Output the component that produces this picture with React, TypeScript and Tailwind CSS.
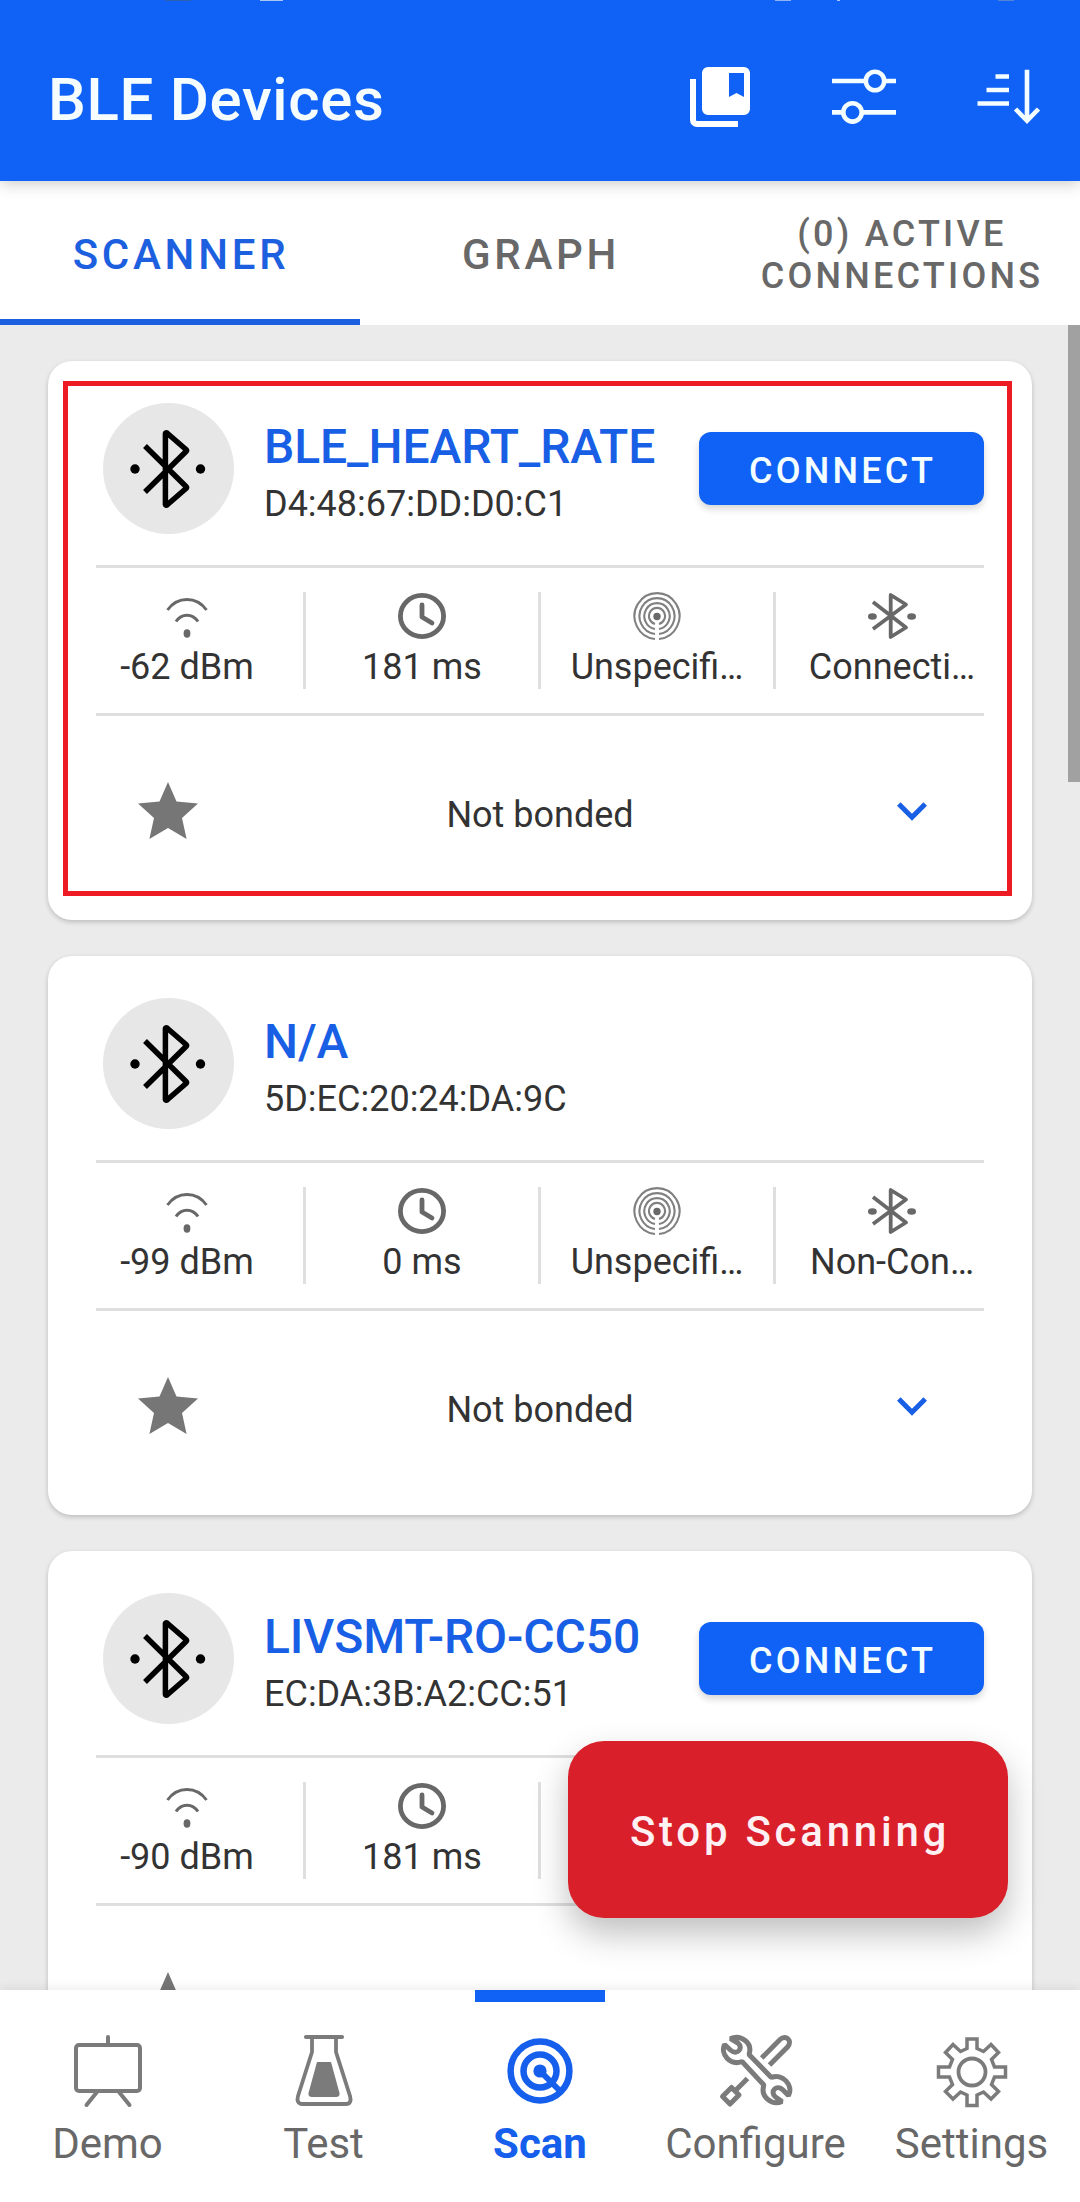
import React from "react";

type Device = {
  name: string;
  address: string;
  rssi: string;
  interval: string;
  mode: string;
  connectable: boolean;
  highlighted?: boolean;
};

const devices: Device[] = [
  { name: "BLE_HEART_RATE", address: "D4:48:67:DD:D0:C1", rssi: "-62 dBm", interval: "181 ms", mode: "Connecti…", connectable: true, highlighted: true },
  { name: "N/A", address: "5D:EC:20:24:DA:9C", rssi: "-99 dBm", interval: "0 ms", mode: "Non-Con…", connectable: false },
  { name: "LIVSMT-RO-CC50", address: "EC:DA:3B:A2:CC:51", rssi: "-90 dBm", interval: "181 ms", mode: "", connectable: true },
];

function BookmarksIcon() {
  return (
    <svg className="h-[60px] w-[61px]" viewBox="0 0 61 60" fill="none">
      <path d="M3 12V53a4 4 0 0 0 4 4H48" stroke="#fff" strokeWidth="6" />
      <path fillRule="evenodd" fill="#fff" d="M18 0H54a6 6 0 0 1 6 6V42a6 6 0 0 1-6 6H18a6 6 0 0 1-6-6V6a6 6 0 0 1 6-6ZM39 6V30L46.500 26 54 30V6Z" />
    </svg>
  );
}

function FilterIcon() {
  return (
    <svg className="h-[56px] w-[64px]" viewBox="0 0 64 56" fill="none" stroke="#f4fdff" strokeWidth="4.600">
      <path d="M0 12H33.500M52.500 12H64M0 43.400H11M30 43.400H64" />
      <circle cx="43" cy="12" r="9.200" />
      <circle cx="20.500" cy="43.400" r="9.200" />
    </svg>
  );
}

function SortIcon() {
  return (
    <svg className="h-[56px] w-[64px]" viewBox="0 0 64 56" fill="none" stroke="#f4fdff" strokeWidth="4.600">
      <path d="M18.500 7.500H32M9.500 21H32M0.500 34.500H32M50 0.800V51.500M38.500 40 50 51.800 61.500 40" />
    </svg>
  );
}

function BigBluetoothIcon() {
  return (
    <svg className="h-[78px] w-[76px]" viewBox="0 0 76 78" fill="none" stroke="#000" strokeWidth="5.500" strokeLinejoin="round">
      <path d="M15 16 56 56.500Q57 57.500 56 58.500L37 75a1 1 0 0 1-1.600-.6V3.600A1 1 0 0 1 37 3L56 19.500Q57 20.500 56 21.500L15 62" />
      <circle cx="5" cy="39" r="4.700" fill="#000" stroke="none" />
      <circle cx="70.500" cy="39" r="4.700" fill="#000" stroke="none" />
    </svg>
  );
}

function SmallBluetoothIcon() {
  return (
    <svg className="h-[48px] w-[48px]" viewBox="0 0 48 48" fill="none" stroke="#686868" strokeWidth="3.800">
      <path d="M5 10 38 35.500 22.700 45V3L38 12.500 5 37" strokeLinejoin="round" />
      <ellipse cx="4.400" cy="24.500" rx="4.400" ry="3.300" fill="#686868" stroke="none" />
      <ellipse cx="43.600" cy="24.500" rx="4.400" ry="3.300" fill="#686868" stroke="none" />
    </svg>
  );
}

function SignalIcon() {
  return (
    <svg className="h-[48px] w-[48px]" viewBox="0 0 48 48" fill="none" stroke="#686868" strokeWidth="3">
      <path d="M4.500 18C14.500 4 33.500 4 43.500 18M13 29.500C18.500 21 29.500 21 35 29.500" />
      <ellipse cx="24" cy="41.500" rx="3.400" ry="4.200" fill="#686868" stroke="none" />
    </svg>
  );
}

function ClockIcon() {
  return (
    <svg className="h-[48px] w-[48px]" viewBox="0 0 48 48" fill="none" stroke="#686868" strokeWidth="4.800">
      <ellipse cx="24" cy="24" rx="21.600" ry="20.600" />
      <path d="M24 13V25L34 31" strokeLinecap="round" strokeLinejoin="round" />
    </svg>
  );
}

function BeaconIcon() {
  return (
    <svg className="h-[50px] w-[48px]" viewBox="0 0 48 50" fill="none" stroke="#808080" strokeWidth="2.100">
      <path d="M22 47a22.500 23 0 1 1 4 0M22 42a17.500 18 0 1 1 4 0M22 37a12.700 13 0 1 1 4 0M22 32a8 8.200 0 1 1 4 0" />
      <circle cx="24" cy="24.500" r="3.700" fill="#686868" stroke="none" />
    </svg>
  );
}

function StarIcon() {
  return (
    <svg className="h-[57px] w-[60px]" viewBox="0 0 60 57" fill="#767676">
      <path d="M30 0 38.500 19.500 60 21.500 44 36 48.600 57 30 46 11.400 57 16 36 0 21.500 21.500 19.500Z" />
    </svg>
  );
}

function ChevronIcon() {
  return (
    <svg className="h-[20px] w-[30px]" viewBox="0 0 30 20" fill="none" stroke="#185fe5" strokeWidth="5">
      <path d="M1.800 2 15 15.200 28.200 2" />
    </svg>
  );
}

function DemoIcon() {
  return (
    <svg className="h-[76px] w-[76px]" viewBox="0 0 76 76" fill="none" stroke="#7b7b7b" strokeWidth="4" strokeLinecap="round">
      <rect x="6" y="12" width="64" height="46" rx="3" />
      <path d="M38 4V11M27 59 16.500 72M49 59 59.500 72" />
    </svg>
  );
}

function TestIcon() {
  return (
    <svg className="h-[76px] w-[76px]" viewBox="0 0 76 76" fill="none" stroke="#7b7b7b" strokeWidth="3.800">
      <path d="M20 4H56" strokeWidth="4.200" strokeLinecap="round" />
      <path d="M26 4V19L12 63C10.500 68 12.500 71 16 71H60C64 71 65.500 68 64 63L50 19V4" />
      <path d="M31 29H45L53.500 60Q54 64 50 64H26Q22 64 22.500 60Z" fill="#7b7b7b" stroke="none" />
    </svg>
  );
}

function ScanIcon() {
  return (
    <svg className="h-[76px] w-[76px]" viewBox="0 0 76 76" fill="none" stroke="#155fec" strokeWidth="6.500">
      <circle cx="38" cy="38" r="29.400" />
      <circle cx="38" cy="38" r="16.500" />
      <circle cx="38" cy="38" r="6.600" fill="#155fec" stroke="none" />
      <path d="M38 38 59 59" strokeWidth="6" />
    </svg>
  );
}

function ConfigureIcon() {
  return (
    <svg className="h-[76px] w-[76px]" viewBox="0 0 76 76" fill="none" stroke="#7b7b7b" strokeWidth="5">
      <path d="M12.500 5.500C23 1 35 10 31 21.500L53.400 44.500C64 40 76 52 70.500 62.500L65 57C59 51 51 58 57.500 64L64 68.500C54 73 42 64 45.900 52L24 28.500C12 33 2 21 6.500 11.500L12.400 17C19 23 26 15 19.900 10Z" strokeLinejoin="bevel" />
      <path d="M43.700 25 62 6.500C68 1 75 8 69.500 14L51.500 32M29.500 45.500 17 58" />
      <path d="M13.500 54.500 21 62 12 71 4.500 63.500Z" strokeLinejoin="round" />
    </svg>
  );
}

function SettingsIcon() {
  return (
    <svg className="h-[76px] w-[76px]" viewBox="0 0 76 76" fill="none" stroke="#7b7b7b" strokeWidth="3.500">
      <path d="M33 6H43V15.500L49.500 18.500 57 11.500 64.500 19.500 57.500 26.500 60.500 34H71.500V44H60.500L57.500 51.500 64.500 58.500 57 66 49.500 59 43 62V72.500H33V62L26.500 59 19 66 11.500 58.500 18.500 51.500 15.500 44H4.500V34H15.500L18.500 26.500 11.500 19.500 19 11.500 26.500 18.500 33 15.500Z" />
      <circle cx="38" cy="39" r="13.500" strokeWidth="3.800" />
    </svg>
  );
}

function Stat({ icon, label, last }: { icon: React.ReactNode; label: string; last?: boolean }) {
  return (
    <div className={last ? "flex h-[97px] w-[232px] flex-col items-center" : "flex h-[97px] w-[235px] flex-col items-center border-r-[3px] border-[#dfdfdf]"}>
      <div className="h-[50px]">{icon}</div>
      <span className="mt-[4px] text-[36px] leading-[42px] whitespace-nowrap">{label}</span>
    </div>
  );
}

function DeviceCard({ device }: { device: Device }) {
  const complete = device.mode !== "";
  return (
    <section className="relative flex h-[559px] w-[984px] shrink-0 flex-col rounded-[24px] bg-white px-12 text-[#333] shadow-[0_2px_5px_rgba(0,0,0,0.2)]">
      <div className="flex h-[204px] items-start">
        <div className="mt-[42px] ml-[7px] flex size-[131px] items-center justify-center rounded-full bg-[#e7e7e7] pr-px">
          <BigBluetoothIcon />
        </div>
        <div className="mt-[57px] ml-[30px] flex flex-col">
          <h2 className="text-[48px] leading-[58px] font-medium tracking-[-0.1px] whitespace-nowrap text-[#185fe5]">{device.name}</h2>
          <p className="text-[36px] leading-[56px] whitespace-nowrap">{device.address}</p>
        </div>
        {device.connectable && (
          <button className="mt-[71px] ml-auto h-[73px] w-[285px] rounded-[12px] bg-[#0f62f5] pt-[5px] pl-[2px] text-center text-[36px] font-medium tracking-[3.2px] text-[#f4fdff] shadow-[0_4px_7px_rgba(0,0,0,0.16)]">
            CONNECT
          </button>
        )}
      </div>
      <div className="-mx-[25px] flex h-[151px] flex-col">
        <div className="mx-[25px] h-[3px] bg-[#dfdfdf]" />
        <div className="flex h-[145px] items-center">
          <Stat icon={<SignalIcon />} label={device.rssi} />
          <Stat icon={<ClockIcon />} label={device.interval} />
          {complete && <Stat icon={<BeaconIcon />} label="Unspecifi…" />}
          {complete && <Stat icon={<SmallBluetoothIcon />} label={device.mode} last />}
        </div>
        <div className="mx-[25px] h-[3px] bg-[#dfdfdf]" />
      </div>
      <div className="flex items-start justify-between pt-[66px] pr-[57px] pl-[42px]">
        <StarIcon />
        {complete && <p className="mt-[12px] mr-[15px] w-[300px] text-center text-[36px] leading-[42px]">Not bonded</p>}
        <div className="mt-[20px]"><ChevronIcon /></div>
      </div>
      {device.highlighted && <div className="absolute top-[20px] left-[15px] h-[515px] w-[949px] border-[5px] border-[#ed1c24]" />}
    </section>
  );
}

const navItems = [
  { label: "Demo", icon: <DemoIcon /> },
  { label: "Test", icon: <TestIcon /> },
  { label: "Scan", icon: <ScanIcon />, active: true },
  { label: "Configure", icon: <ConfigureIcon /> },
  { label: "Settings", icon: <SettingsIcon /> },
];

export default function App() {
  return (
    <div className="relative flex h-[2202px] w-[1080px] flex-col overflow-hidden bg-[#ebebeb] font-['Roboto',sans-serif]">
      <header className="relative z-10 flex h-[181px] shrink-0 items-center bg-[#0f62f5] pr-[39px] pl-[48px] shadow-[0_3px_14px_rgba(0,0,0,0.2)]">
        <div className="absolute inset-x-0 top-0 flex h-px">
          <div className="ml-[165px] w-[26px] bg-[#2c5fae]" />
          <div className="ml-[69px] w-[23px] bg-[#a9c6f5]" />
          <div className="ml-[492px] w-[16px] bg-[#8fb2f2]" />
          <div className="ml-[46px] w-[3px] bg-[#a9c6f5]" />
          <div className="ml-[158px] w-[16px] bg-[#5483d8]" />
        </div>
        <h1 className="mt-[18px] text-[60px] leading-[70px] font-medium tracking-[0.65px] text-[#f6fdff]">BLE Devices</h1>
        <div className="mt-[12px] ml-auto flex items-center">
          <BookmarksIcon />
          <div className="mt-px ml-[81px]"><FilterIcon /></div>
          <div className="mt-px ml-[81px]"><SortIcon /></div>
        </div>
      </header>
      <nav className="grid h-[144px] shrink-0 grid-cols-3 bg-white text-center font-medium text-[#686868]">
        <div className="flex items-center justify-center border-b-[6px] border-[#1c60e0] pt-[9px] pl-[2px] text-[42px] tracking-[3.75px] text-[#1c60e0]">SCANNER</div>
        <div className="flex items-center justify-center pt-[3px] pl-[2px] text-[42px] tracking-[3.75px]">GRAPH</div>
        <div className="flex items-center justify-center pt-[3px] pl-[4px] text-[36px] leading-[42px] tracking-[3.25px]">(0) ACTIVE<br />CONNECTIONS</div>
      </nav>
      <main className="flex min-h-0 flex-1 overflow-hidden">
        <div className="flex w-[1068px] flex-col gap-[36px] pt-[36px] pl-[48px]">
          {devices.map((device) => <DeviceCard key={device.address} device={device} />)}
        </div>
        <div className="h-[457px] w-[12px] bg-[#a1a1a1]" />
      </main>
      <button className="absolute top-[1741px] left-[568px] h-[177px] w-[440px] rounded-[36px] bg-[#d91f29] pt-[4px] pl-[4px] text-center text-[42px] font-medium tracking-[3.75px] text-[#fff0f3] shadow-[0_16px_34px_rgba(0,0,0,0.25)]">
        Stop Scanning
      </button>
      <footer className="z-10 grid h-[212px] shrink-0 grid-cols-5 bg-white shadow-[0_-2px_10px_rgba(0,0,0,0.08)]">
        {navItems.map(({ label, icon, active }) => (
          <div key={label} className={active ? "flex flex-col items-center text-[#155fec]" : "flex flex-col items-center text-[#686868]"}>
            <div className={active ? "h-[12px] w-[130px] bg-[#0f62f5]" : "h-[12px] w-[130px]"} />
            <div className="mt-[31px] h-[76px]">{icon}</div>
            <span className={active ? "mt-[11px] text-[42px] leading-[48px] font-bold" : "mt-[11px] pr-px text-[42px] leading-[48px]"}>{label}</span>
          </div>
        ))}
      </footer>
    </div>
  );
}
